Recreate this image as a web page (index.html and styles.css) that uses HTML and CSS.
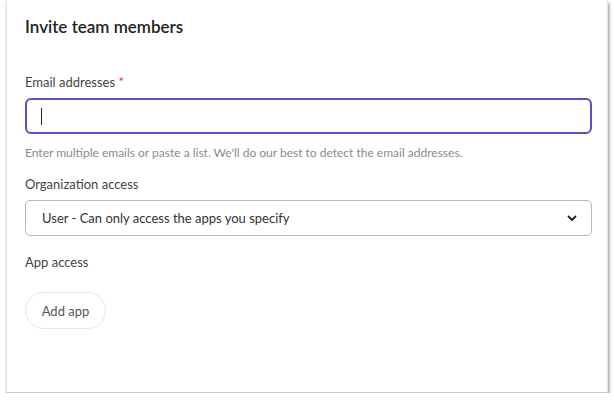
FILE: index.html
```html
<!DOCTYPE html>
<html lang="en">
<head>
    <meta charset="UTF-8">
    <meta name="viewport" content="width=device-width, initial-scale=1.0">
    <title>Invite team members</title>
    <link rel="stylesheet" href="styles.css">
</head>
<body>
    <div class="invite-card">
        <h2 class="invite-title">Invite team members</h2>
        <form class="invite-form">
            <label class="field-label" for="emails">Email addresses <span class="required">*</span></label>
            <div class="email-input" id="emails"><span class="caret"></span></div>
            <p class="field-help">Enter multiple emails or paste a list. We'll do our best to detect the email addresses.</p>

            <label class="field-label" for="org-access">Organization access</label>
            <div class="select-box" id="org-access">
                <span>User - Can only access the apps you specify</span>
                <svg class="chevron" width="12" height="12" viewBox="0 0 12 12">
                    <path d="M2.5 4.5 L6 8 L9.5 4.5" fill="none" stroke="#222" stroke-width="1.8" stroke-linecap="round" stroke-linejoin="round"/>
                </svg>
            </div>

            <label class="field-label">App access</label>
            <button type="button" class="add-app-button">Add app</button>
        </form>
    </div>
</body>
</html>
```

FILE: styles.css
```css
body {
    margin: 0;
    background-color: #fff;
    font-family: 'Lato', 'Noto Sans', sans-serif;
    color: #333;
}
.invite-card {
    width: 602px;
    height: 393px;
    margin-left: 6px;
    box-sizing: border-box;
    padding: 16px 18px 0 18px;
    background-color: #fff;
    border-left: 1px solid #e2e2e2;
    border-right: 1px solid #e2e2e2;
    border-bottom: 1px solid #c8c8c8;
    box-shadow: 1px 3px 3px rgba(0, 0, 0, 0.45);
}
.invite-title {
    margin: 0;
    font-size: 17px;
    font-weight: 600;
    color: #222;
    line-height: 22px;
}
.invite-form {
    display: flex;
    flex-direction: column;
    align-items: flex-start;
    margin-top: 35px;
}
.field-label {
    font-size: 13px;
    color: #444;
    line-height: 18px;
}
.required {
    color: #d9472b;
}
.email-input {
    width: 567px;
    height: 36px;
    box-sizing: border-box;
    margin-top: 7px;
    border: 2px solid #5a4fcf;
    border-radius: 6px;
    display: flex;
    align-items: center;
    padding-left: 14px;
}
.caret {
    width: 1px;
    height: 17px;
    background-color: #222;
}
.field-help {
    margin: 11px 0 14px;
    font-size: 12px;
    line-height: 16px;
    color: #8a8a8a;
}
.select-box {
    width: 567px;
    height: 36px;
    box-sizing: border-box;
    margin-top: 7px;
    border: 1px solid #b8b8b8;
    border-radius: 5px;
    display: flex;
    align-items: center;
    justify-content: space-between;
    padding: 0 13px 0 16px;
    font-size: 13px;
    color: #333;
    margin-bottom: 17px;
}
.add-app-button {
    margin-top: 21px;
    width: 81px;
    height: 37px;
    border: 1px solid #e8e8e8;
    border-radius: 19px;
    background-color: #fff;
    font-family: inherit;
    font-size: 13px;
    color: #555;
}
```
